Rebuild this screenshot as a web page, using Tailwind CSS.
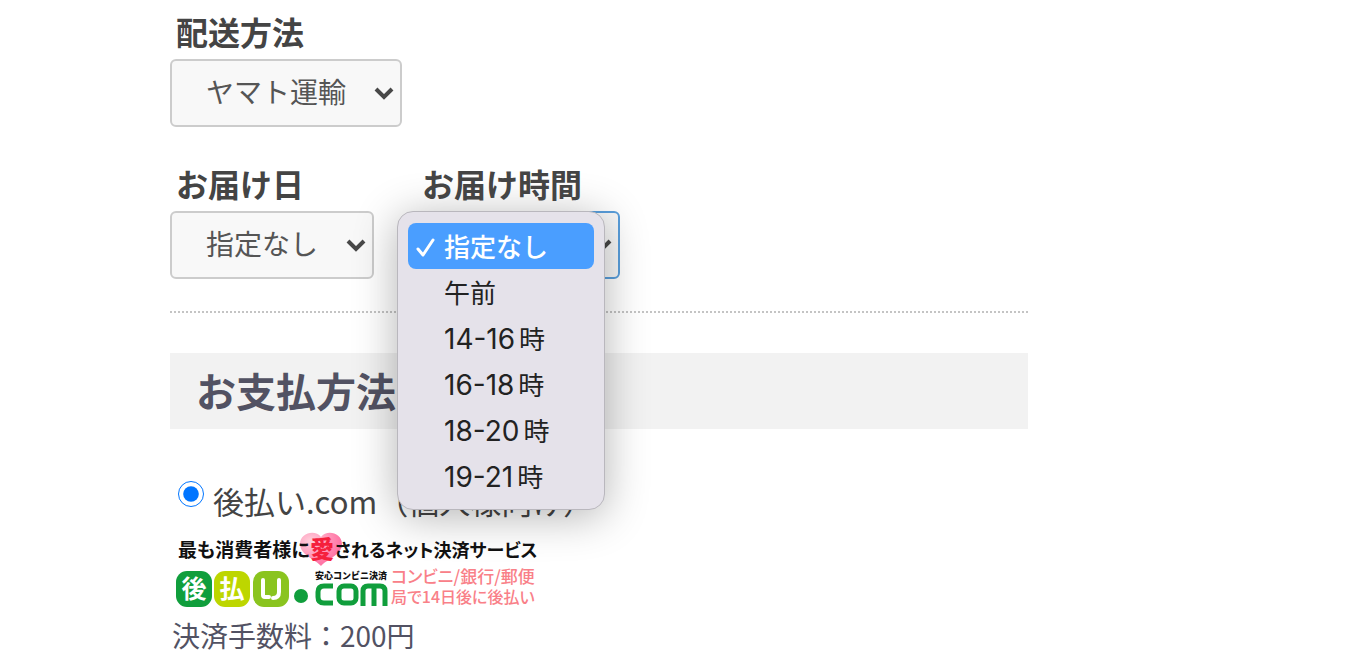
<!DOCTYPE html>
<html lang="ja">

<head>
    <meta charset="UTF-8">
    <meta name="viewport" content="width=device-width, initial-scale=1.0">
    <title>お支払方法の選択</title>
    <script src="https://cdn.jsdelivr.net/npm/@tailwindcss/browser@4"></script>
</head>

<body class="bg-white text-[#444444] font-['Noto_Sans_CJK_JP',sans-serif] overflow-x-hidden">
    <main class="ml-[170px] mr-8 max-w-[858px] pt-2">
        <!-- 配送方法 -->
        <div class="w-fit">
            <label for="delivery" class="block pl-1.5 mb-[5px] text-[32px] leading-[46px] font-bold">配送方法</label>
            <div class="relative w-[232px]">
                <select id="delivery"
                    class="appearance-none w-full h-[68px] pl-[34px] pb-1 border-2 border-[#cccccc] rounded-md bg-[#f8f8f8] text-[28px] text-[#555555]">
                    <option>ヤマト運輸</option>
                </select>
                <svg class="absolute right-2 top-7 w-5 h-[14px] pointer-events-none" viewBox="0 0 20 14" fill="none"
                    stroke="#484848" stroke-width="4">
                    <path d="M2 2l8 8 8-8" />
                </svg>
            </div>
        </div>

        <!-- お届け日・お届け時間 -->
        <div class="flex gap-[42px] mt-[33px]">
            <div>
                <label for="date" class="block pl-1.5 mb-[5px] text-[32px] leading-[46px] font-bold">お届け日</label>
                <div class="relative w-[204px]">
                    <select id="date"
                        class="appearance-none w-full h-[68px] pl-[34px] pb-1 border-2 border-[#cccccc] rounded-md bg-[#f8f8f8] text-[28px] text-[#555555]">
                        <option>指定なし</option>
                    </select>
                    <svg class="absolute right-2 top-7 w-5 h-[14px] pointer-events-none" viewBox="0 0 20 14"
                        fill="none" stroke="#484848" stroke-width="4">
                        <path d="M2 2l8 8 8-8" />
                    </svg>
                </div>
            </div>
            <div>
                <label for="time" class="relative z-20 block pl-1.5 mb-[5px] text-[32px] leading-[46px] font-bold">お届け時間</label>
                <div class="relative w-[204px]">
                    <select id="time"
                        class="appearance-none w-full h-[68px] pl-[34px] pb-1 border-2 border-[#5a9fdc] rounded-md bg-[#f8f8f8] text-[28px] text-[#555555]">
                        <option>指定なし</option>
                    </select>
                    <svg class="absolute right-2 top-7 w-5 h-[14px] pointer-events-none" viewBox="0 0 20 14"
                        fill="none" stroke="#484848" stroke-width="4">
                        <path d="M2 2l8 8 8-8" />
                    </svg>

                    <!-- 時間帯リスト -->
                    <div role="listbox" aria-label="お届け時間"
                        class="absolute z-10 -left-[19px] top-0 w-[208px] px-2.5 pt-[11px] pb-2.5 border border-[#b9b7bd] rounded-2xl bg-[#e5e2ea] shadow-[0_6px_44px_rgba(0,0,0,0.3)] text-[26px] text-[#222222] font-['Inter','Noto_Sans_CJK_JP',sans-serif]">
                        <button type="button" role="option" aria-selected="true"
                            class="flex items-center w-full h-[46px] pt-0.5 rounded-lg bg-[#4a9eff] text-white font-medium">
                            <svg class="w-5 h-5 ml-2 mr-2" viewBox="0 0 20 20" fill="none" stroke="currentColor"
                                stroke-width="3" stroke-linecap="round" stroke-linejoin="round">
                                <path d="M2 12l5 6L17 3" />
                            </svg>
                            指定なし</button>
                        <button type="button" role="option"
                            class="flex items-center w-full h-[46px] pl-9 pt-0.5">午前</button>
                        <button type="button" role="option"
                            class="flex items-center gap-1 w-full h-[46px] pl-9 pt-0.5"><span
                                class="text-[28px]">14-16</span>時</button>
                        <button type="button" role="option"
                            class="flex items-center gap-1 w-full h-[46px] pl-9 pt-0.5"><span
                                class="text-[28px]">16-18</span>時</button>
                        <button type="button" role="option"
                            class="flex items-center gap-1 w-full h-[46px] pl-9 pt-0.5"><span
                                class="text-[28px]">18-20</span>時</button>
                        <button type="button" role="option"
                            class="flex items-center gap-1 w-full h-[46px] pl-9 pt-0.5"><span
                                class="text-[28px]">19-21</span>時</button>
                    </div>
                </div>
            </div>
        </div>

        <hr class="mt-8 border-0 border-t-2 border-dotted border-[#c4c4c4]">

        <h2 class="mt-10 h-[76px] pl-[26px] bg-[#f2f2f2] text-[40px] leading-[74px] font-bold text-[#525263]">お支払方法</h2>

        <!-- 後払い.com -->
        <div class="flex items-start mt-[49px] mb-[3px] pl-2">
            <input type="radio" id="payment" name="payment" checked class="w-[26px] h-[26px] mt-[3px] mr-[9px]">
            <label for="payment" class="text-[31px] leading-[46px]">後払い.com（個人様向け）</label>
        </div>

        <svg class="w-[380px] h-[87px]" viewBox="0 0 380 87" role="img" aria-label="後払い.com">
            <defs>
                <radialGradient id="heart" cx="0.25" cy="0.25" r="0.7">
                    <stop offset="0" stop-color="#ffd0dc" />
                    <stop offset="1" stop-color="#ff76a6" />
                </radialGradient>
            </defs>
            <path d="M151 39C145 32 130 28 130 17C130 6 145 2 151 10C157 2 172 6 172 17C172 28 157 32 151 39Z"
                fill="url(#heart)" />
            <g font-size="18" font-weight="700" fill="#111" style="font-feature-settings: 'palt'">
                <text x="8" y="30" font-size="19">最も消費者様に</text>
                <text x="140" y="31" font-size="24" font-weight="900" fill="#f5203c">愛</text>
                <text x="165" y="30">されるネット決済サービス</text>
            </g>
            <rect x="6" y="44" width="36" height="36" rx="11" fill="#109e3c" />
            <rect x="44" y="44" width="36" height="36" rx="11" fill="#bdd600" />
            <rect x="83" y="44" width="36" height="36" rx="11" fill="#8ac41f" />
            <g font-size="25" font-weight="700" fill="#fff" text-anchor="middle">
                <text x="24" y="71">後</text>
                <text x="62" y="71">払</text>
            </g>
            <path d="M93 53v15q0 2 2 2h4M109 53v12q0 6-6 6" fill="none" stroke="#fff" stroke-width="4"
                stroke-linecap="round" />
            <circle cx="131" cy="69" r="7" fill="#109e3c" />
            <text x="145" y="52" font-size="9" font-weight="900" fill="#111">安心コンビニ決済</text>
            <g fill="none" stroke="#109e3c" stroke-width="5">
                <path d="M163 59h-9q-6 0-6 6v5q0 6 6 6h9" />
                <rect x="169" y="59" width="17" height="17" rx="5" />
                <path d="M193 79V64q0-5 5-5h12q5 0 5 5v15M204 59v20" />
            </g>
            <g font-size="17" font-weight="500" fill="#f98088" style="font-feature-settings: 'palt'">
                <text x="221" y="56">コンビニ/銀行/郵便</text>
                <text x="221" y="76" font-size="16">局で14日後に後払い</text>
            </g>
        </svg>

        <p class="pl-0.5 text-[28px] leading-[42px] text-[#525263]">決済手数料：200円</p>
    </main>

    <script>
        const timeSelect = document.getElementById('time');
        const listbox = document.querySelector('[role="listbox"]');

        // リストから選んだら閉じる
        listbox.querySelectorAll('button').forEach((button) => {
            button.addEventListener('click', () => {
                timeSelect.options[0].textContent = button.textContent.trim();
                listbox.classList.add('hidden');
            });
        });
    </script>
</body>

</html>
